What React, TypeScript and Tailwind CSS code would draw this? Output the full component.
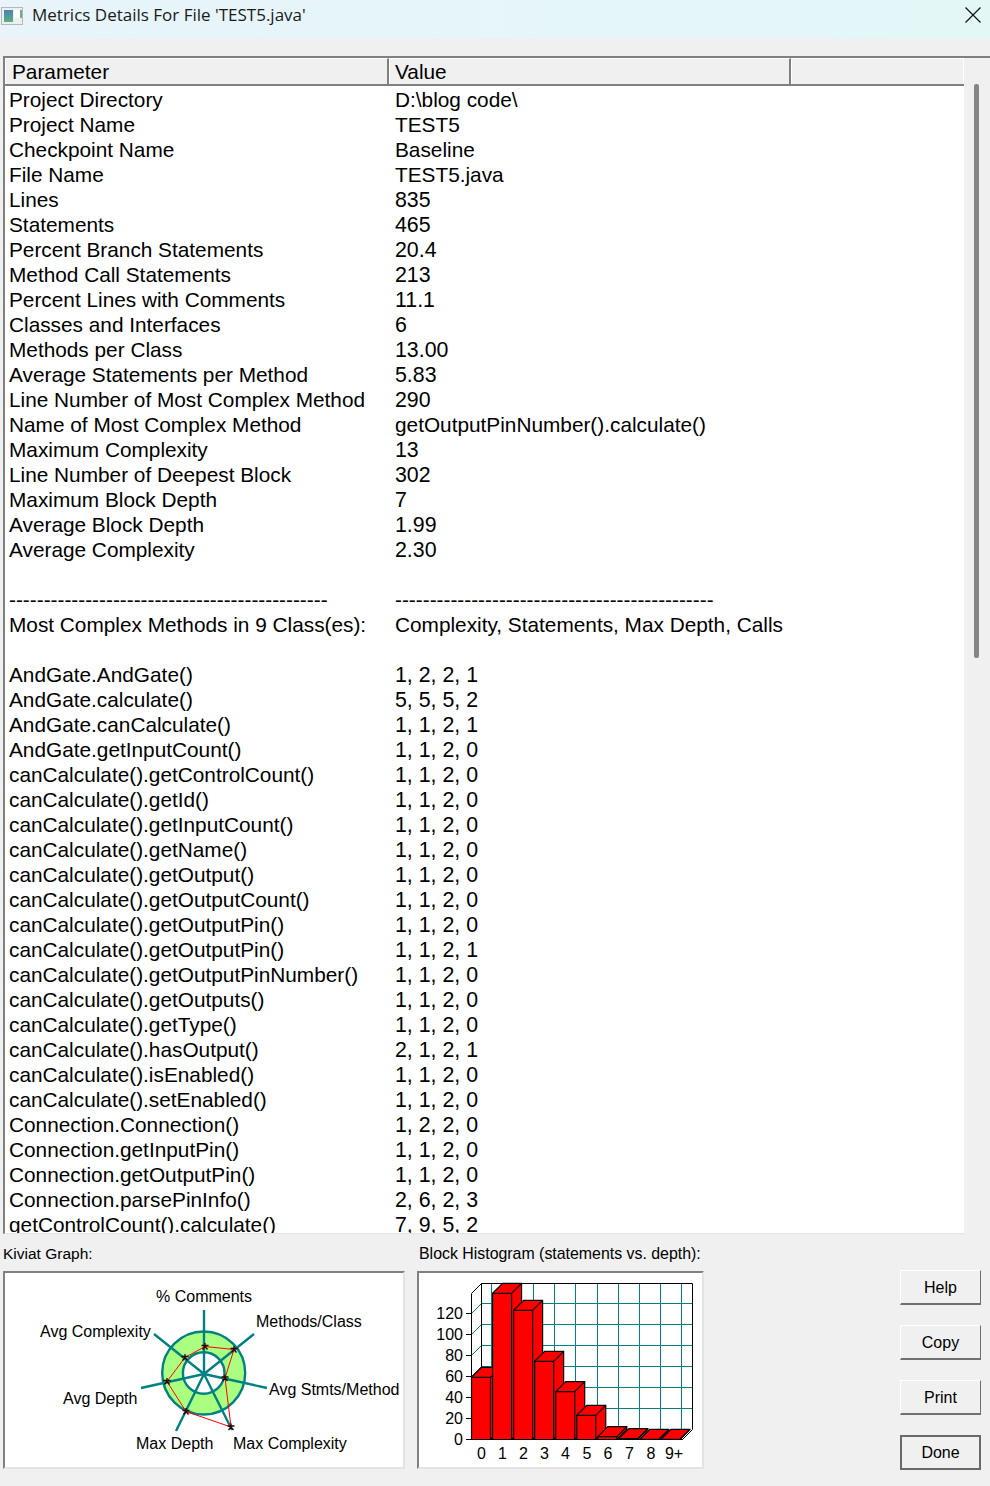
import React from "react";

const DASH = "----------------------------------------------";
const rows: [string, string][] = [
  ["Project Directory", "D:\\blog code\\"],
  ["Project Name", "TEST5"],
  ["Checkpoint Name", "Baseline"],
  ["File Name", "TEST5.java"],
  ["Lines", "835"],
  ["Statements", "465"],
  ["Percent Branch Statements", "20.4"],
  ["Method Call Statements", "213"],
  ["Percent Lines with Comments", "11.1"],
  ["Classes and Interfaces", "6"],
  ["Methods per Class", "13.00"],
  ["Average Statements per Method", "5.83"],
  ["Line Number of Most Complex Method", "290"],
  ["Name of Most Complex Method", "getOutputPinNumber().calculate()"],
  ["Maximum Complexity", "13"],
  ["Line Number of Deepest Block", "302"],
  ["Maximum Block Depth", "7"],
  ["Average Block Depth", "1.99"],
  ["Average Complexity", "2.30"],
  ["", ""],
  [DASH, DASH],
  ["Most Complex Methods in 9 Class(es):", "Complexity, Statements, Max Depth, Calls"],
  ["", ""],
  ["AndGate.AndGate()", "1, 2, 2, 1"],
  ["AndGate.calculate()", "5, 5, 5, 2"],
  ["AndGate.canCalculate()", "1, 1, 2, 1"],
  ["AndGate.getInputCount()", "1, 1, 2, 0"],
  ["canCalculate().getControlCount()", "1, 1, 2, 0"],
  ["canCalculate().getId()", "1, 1, 2, 0"],
  ["canCalculate().getInputCount()", "1, 1, 2, 0"],
  ["canCalculate().getName()", "1, 1, 2, 0"],
  ["canCalculate().getOutput()", "1, 1, 2, 0"],
  ["canCalculate().getOutputCount()", "1, 1, 2, 0"],
  ["canCalculate().getOutputPin()", "1, 1, 2, 0"],
  ["canCalculate().getOutputPin()", "1, 1, 2, 1"],
  ["canCalculate().getOutputPinNumber()", "1, 1, 2, 0"],
  ["canCalculate().getOutputs()", "1, 1, 2, 0"],
  ["canCalculate().getType()", "1, 1, 2, 0"],
  ["canCalculate().hasOutput()", "2, 1, 2, 1"],
  ["canCalculate().isEnabled()", "1, 1, 2, 0"],
  ["canCalculate().setEnabled()", "1, 1, 2, 0"],
  ["Connection.Connection()", "1, 2, 2, 0"],
  ["Connection.getInputPin()", "1, 1, 2, 0"],
  ["Connection.getOutputPin()", "1, 1, 2, 0"],
  ["Connection.parsePinInfo()", "2, 6, 2, 3"],
  ["getControlCount().calculate()", "7, 9, 5, 2"],
];

const spokes: [number, number][] = [
  [204, 1310],
  [254, 1334],
  [267, 1388],
  [232, 1430],
  [176, 1431],
  [141, 1388],
  [154, 1334],
];

const poly: [number, number][] = [
  [205, 1346.5],
  [234, 1349.5],
  [225, 1378],
  [231, 1427],
  [186, 1411.5],
  [167, 1381.5],
  [185, 1357.5],
];

const kLabels: [string, number, number][] = [
  ["% Comments", 156, 1296],
  ["Methods/Class", 256, 1321],
  ["Avg Complexity", 40, 1331],
  ["Avg Stmts/Method", 269, 1389],
  ["Avg Depth", 63, 1398],
  ["Max Depth", 136, 1443],
  ["Max Complexity", 233, 1443],
];

function Kiviat() {
  return (
    <svg viewBox="5 1273 398 194" className="block w-full h-full">
      <circle cx={203.7} cy={1373} r={31.5} fill="none" stroke="#aaff80" strokeWidth={21} />
      <circle cx={203.7} cy={1373} r={41.5} fill="none" stroke="#008080" strokeWidth={2.4} />
      <circle cx={203.7} cy={1373} r={20.8} fill="none" stroke="#008080" strokeWidth={2.4} />
      {spokes.map(([x, y], i) => (
        <line key={i} x1={204} y1={1374} x2={x} y2={y} stroke="#008080" strokeWidth={2.4} />
      ))}
      <polygon points={poly.map((p) => p.join(",")).join(" ")} fill="none" stroke="#ff0000" strokeWidth={1} />
      {poly.map(([x, y], i) => (
        <path
          key={i}
          d={`M${x - 3.5} ${y - 1}H${x + 3.5}M${x} ${y - 3.5}V${y + 1}M${x - 2.5} ${y + 3}L${x} ${y}L${x + 2.5} ${y + 3}`}
          stroke="#300000"
          strokeWidth={1.3}
          fill="none"
        />
      ))}
      {kLabels.map(([t, x, y]) => (
        <text key={t} x={x} y={y} dominantBaseline="central" fontFamily="'Liberation Sans', Arial, sans-serif" fontSize={16} fill="#000">
          {t}
        </text>
      ))}
    </svg>
  );
}

const bars = [1377.3, 1293.3, 1310.3, 1361.3, 1391.7, 1415.3, 1436.7, 1438.7, 1439.3, 1439.3];
const yLabels: [string, number][] = [
  ["120", 1313],
  ["100", 1334],
  ["80", 1355],
  ["60", 1376],
  ["40", 1397],
  ["20", 1418],
  ["0", 1439],
];
const xLabels: [string, number][] = [
  ["0", 481.5],
  ["1", 502.5],
  ["2", 523.5],
  ["3", 544.5],
  ["4", 565.5],
  ["5", 587],
  ["6", 608],
  ["7", 629.5],
  ["8", 651],
  ["9+", 674],
];

function Histogram() {
  const X0 = 471.5;
  const YB = 1439.5;
  return (
    <svg viewBox="419 1273 283 194" className="block w-full h-full">
      <g stroke="#008080" strokeWidth={1} shapeRendering="crispEdges">
        {[0, 1, 2, 3, 4, 5].map((i) => (
          <line key={i} x1={481.5} x2={692.5} y1={1303.5 + 21 * i} y2={1303.5 + 21 * i} />
        ))}
        {[0, 1, 2, 3, 4, 5, 6, 7, 8, 9].map((i) => (
          <line key={i} x1={491.5 + 21.1 * i} x2={491.5 + 21.1 * i} y1={1283.5} y2={1429.5} />
        ))}
      </g>
      {[0, 1, 2, 3, 4, 5].map((i) => (
        <line key={i} x1={471.5} y1={1313.5 + 21 * i} x2={481.5} y2={1303.5 + 21 * i} stroke="#008080" strokeWidth={1} />
      ))}
      <path
        d="M481.5 1429.5V1283.5H692.5V1429.5L682.5 1439.5H471.5V1293.5L481.5 1283.5"
        fill="none"
        stroke="#000"
        strokeWidth={1}
      />
      {bars.map((top, i) => {
        const x = X0 + 21.05 * i;
        const w = 19;
        return (
          <g key={i} stroke="#000" strokeWidth={1.2} fill="#ff0000">
            <path d={`M${x} ${YB}V${top}L${x + 10} ${top - 10}H${x + w + 10}V${YB - 10}L${x + w} ${YB}Z`} />
            <path d={`M${x} ${top}H${x + w}V${YB}M${x + w} ${top}L${x + w + 10} ${top - 10}`} fill="none" />
          </g>
        );
      })}
      <line x1={471.5} y1={1439.5} x2={682.5} y2={1439.5} stroke="#000" />
      {yLabels.map(([t, y]) => (
        <g key={t}>
          <line x1={466} x2={471} y1={y + 0.5} y2={y + 0.5} stroke="#000" />
          <text x={463} y={y} textAnchor="end" dominantBaseline="central" fontFamily="'Liberation Sans', Arial, sans-serif" fontSize={16} fill="#000">
            {t}
          </text>
        </g>
      ))}
      {xLabels.map(([t, x]) => (
        <text key={t} x={x} y={1453} textAnchor="middle" dominantBaseline="central" fontFamily="'Liberation Sans', Arial, sans-serif" fontSize={16} fill="#000">
          {t}
        </text>
      ))}
    </svg>
  );
}

function Btn({ label, main }: { label: string; main?: boolean }) {
  return (
    <div
      className={
        main
          ? "h-[35px] w-[81px] flex items-center justify-center border-2 border-[#696969] bg-[#f0f0f0] text-[16px] text-black"
          : "h-[35px] w-[81px] pt-[2px] flex items-center justify-center border-t border-l border-t-white border-l-white border-b-2 border-r border-b-[#707070] border-r-[#707070] bg-[#f0f0f0] text-[16px] text-black"
      }
    >
      {label}
    </div>
  );
}

function valueClass(v: string) {
  return /^\d/.test(v) ? "text-[21.33px] leading-[25px]" : "text-[20.8px] leading-[23px]";
}

export default function App() {
  return (
    <div className="w-[990px] h-[1486px] overflow-hidden bg-[#f0f0f0] flex flex-col font-['Liberation_Sans',Arial,sans-serif] text-black">
      <div className="h-[38px] shrink-0 flex items-center bg-gradient-to-r from-[#e8f4fa] to-[#e3f7f7] relative">
        <svg viewBox="0 0 22 18" className="w-[22px] h-[18px] ml-[1px] mb-[6px] shrink-0">
          <defs>
            <linearGradient id="ico" x1="0" y1="0" x2="0" y2="1">
              <stop offset="0" stopColor="#4f7fb8" />
              <stop offset="1" stopColor="#57b080" />
            </linearGradient>
          </defs>
          <rect x="0.5" y="0.5" width="21" height="17" fill="#eceef0" stroke="#b4b8ba" />
          <rect x="3" y="3" width="9" height="12" fill="url(#ico)" />
          <rect x="13" y="3" width="6" height="8" fill="#fbfbfb" />
          <rect x="19" y="3" width="2" height="8" fill="#6cb080" />
        </svg>
        <span className="ml-[9px] mb-[8px] text-[17px] font-['Open_Sans',sans-serif] text-[#1a1a1a] whitespace-nowrap">
          Metrics Details For File 'TEST5.java'
        </span>
        <svg viewBox="0 0 16 16" className="absolute left-[965px] top-[7px] w-[16px] h-[16px]">
          <path d="M0.5 0.5L15.5 15.5M15.5 0.5L0.5 15.5" stroke="#111" strokeWidth="1.2" fill="none" />
        </svg>
      </div>

      <div className="mt-[18px] ml-[3px] h-[1178px] shrink-0 border-t-2 border-t-[#808080] flex">
        <div className="w-[961px] h-full flex flex-col border-l-2 border-l-[#808080] border-b border-b-[#e3e3e3] overflow-hidden bg-white">
          <div className="h-[28px] shrink-0 flex border-b-2 border-b-[#808080] bg-[#f0f0f0] text-[20.8px] leading-[25px]">
            <div className="w-[384px] shrink-0 pl-[6px] border-r-2 border-r-[#808080] border-l border-l-white border-t border-t-white">Parameter</div>
            <div className="w-[402px] shrink-0 pl-[5px] border-r-2 border-r-[#808080] border-l border-l-white border-t border-t-white">Value</div>
            <div className="flex-1 border-l border-l-white border-t border-t-white border-r border-r-white" />
          </div>
          <div className="pt-[2px] text-[20.8px] leading-[23px] whitespace-nowrap">
            {rows.map(([a, b], i) => (
              <div key={i} className="h-[25px] flex">
                <div className="w-[390px] shrink-0 pl-[4px]">{a}</div>
                <div className={valueClass(b)}>{b}</div>
              </div>
            ))}
          </div>
        </div>
        <div className="flex-1 pl-[10px] pt-[26px]">
          <div className="w-[5px] h-[574px] bg-[#858585] rounded-[2px]" />
        </div>
      </div>

      <div className="flex pl-[3px] pt-[10px]">
        <div className="w-[402px] shrink-0">
          <div className="h-[18px] leading-[20px] mb-[9px] text-[15.5px]">Kiviat Graph:</div>
          <div className="h-[198px] border-t-2 border-l-2 border-t-[#808080] border-l-[#808080] border-r-2 border-b-2 border-r-[#e3e3e3] border-b-[#e3e3e3] bg-white">
            <Kiviat />
          </div>
        </div>
        <div className="w-[287px] shrink-0 ml-[12px]">
          <div className="h-[18px] leading-[20px] ml-[2px] mb-[9px] whitespace-nowrap text-[15.9px]">Block Histogram (statements vs. depth):</div>
          <div className="h-[198px] border-t-2 border-l-2 border-t-[#808080] border-l-[#808080] border-r-2 border-b-2 border-r-[#e3e3e3] border-b-[#e3e3e3] bg-white">
            <Histogram />
          </div>
        </div>
        <div className="ml-[196px] pt-[26px] flex flex-col gap-[20px]">
          <Btn label="Help" />
          <Btn label="Copy" />
          <Btn label="Print" />
          <Btn label="Done" main />
        </div>
      </div>
    </div>
  );
}
